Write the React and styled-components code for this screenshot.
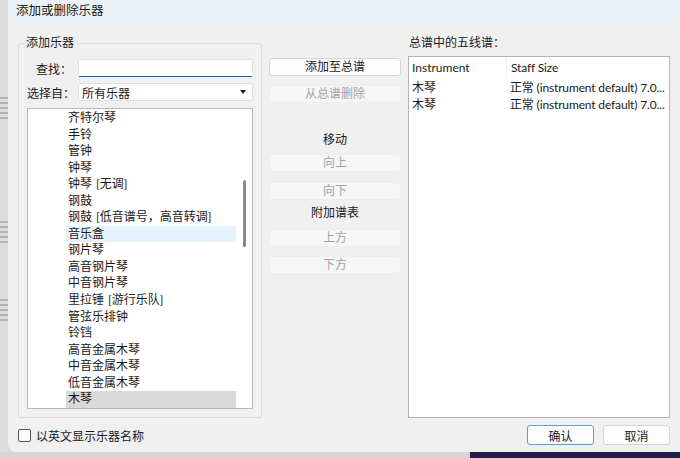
import React from 'react';
import styled, { createGlobalStyle } from 'styled-components';

const GlobalStyle = createGlobalStyle`
  html, body { margin: 0; padding: 0; }
  body {
    width: 680px;
    height: 458px;
    overflow: hidden;
    font-family: "Lato", "Noto Sans CJK SC", sans-serif;
    font-size: 12px;
    color: #1a1a1a;
  }
`;

const instruments = [
  { name: '齐特尔琴' },
  { name: '手铃' },
  { name: '管钟' },
  { name: '钟琴' },
  { name: '钟琴', note: '[无调]' },
  { name: '钢鼓' },
  { name: '钢鼓', note: '[低音谱号，高音转调]' },
  { name: '音乐盒', hover: true },
  { name: '钢片琴' },
  { name: '高音钢片琴' },
  { name: '中音钢片琴' },
  { name: '里拉锤', note: '[游行乐队]' },
  { name: '管弦乐排钟' },
  { name: '铃铛' },
  { name: '高音金属木琴' },
  { name: '中音金属木琴' },
  { name: '低音金属木琴' },
  { name: '木琴', selected: true },
];

// the staff size column is already shortened by the table in the original
const staves = [
  { name: '木琴', size: '正常 (instrument default) 7.0...' },
  { name: '木琴', size: '正常 (instrument default) 7.0...' },
];

const Screen = styled.div`
  width: 680px;
  height: 458px;
  display: flex;
  flex-direction: column;
  background: #d6d6d6;
`;

const Top = styled.div`
  display: flex;
  height: 452px;
`;

const ScoreStrip = styled.svg`
  width: 8px;
  height: 452px;
  flex: none;
  display: block;
`;

const Dialog = styled.div`
  flex: 1;
  display: flex;
  flex-direction: column;
  background: #f0f0f0;
  border-bottom-left-radius: 8px;
  overflow: hidden;
`;

const TitleBar = styled.div`
  height: 25px;
  flex: none;
  background: #eaf2f8;
  padding: 2px 0 0 8px;
  box-sizing: border-box;
  line-height: 18px;
  font-size: 12.5px;
`;

const Body = styled.div`
  flex: 1;
  display: grid;
  grid-template-columns: 244px 132px 262px;
  grid-template-rows: 383px 1fr;
  column-gap: 7px;
  padding: 10px 9px 0 10px;
  box-sizing: border-box;
`;

const GroupBox = styled.fieldset`
  margin: 0;
  padding: 8px 8px 7px 8px;
  border: 1px solid #dadada;
  border-radius: 3px;
  display: flex;
  flex-direction: column;
  gap: 6px;
  min-width: 0;
  box-sizing: border-box;
`;

const Legend = styled.legend`
  padding: 0 2px;
  margin-left: -3px;
  line-height: 16px;
`;

const FieldRow = styled.div`
  display: flex;
  align-items: center;
  height: 18px;
`;

const FieldLabel = styled.label`
  width: 51px;
  flex: none;
  text-align: ${p => (p.$right ? 'right' : 'left')};
  padding-right: ${p => (p.$right ? '6px' : '0')};
  box-sizing: border-box;
`;

const TextInput = styled.input`
  flex: 1;
  height: 18px;
  box-sizing: border-box;
  border: 1px solid #e3e3e3;
  border-bottom: 1px solid #0067c0;
  border-radius: 2px;
  background: #fff;
  outline: none;
  font: inherit;
  padding: 0 4px;
`;

const Select = styled.div`
  flex: 1;
  height: 18px;
  box-sizing: border-box;
  border: 1px solid #e0e0e0;
  border-radius: 3px;
  background: #fff;
  display: flex;
  align-items: center;
  justify-content: space-between;
  padding: 0 6px 0 3px;
`;

const Caret = styled.span`
  width: 0;
  height: 0;
  border-left: 3.5px solid transparent;
  border-right: 3.5px solid transparent;
  border-top: 4px solid #1a1a1a;
`;

const ListBox = styled.div`
  margin-top: 1px;
  height: 301px;
  box-sizing: border-box;
  border: 1px solid #b9b9b9;
  background: #fff;
  display: flex;
  overflow: hidden;
`;

const Items = styled.div`
  flex: 1;
  padding-left: 38px;
  padding-top: 1px;
  display: flex;
  flex-direction: column;
`;

const Item = styled.div`
  height: 16.55px;
  line-height: 16.55px;
  padding-left: 2px;
  flex: none;
  white-space: nowrap;
  background: ${p => (p.$selected ? '#d9d9d9' : p.$hover ? '#e5f1fb' : 'transparent')};
`;

const Note = styled.span`
  margin-left: 4px;
`;

const ScrollTrack = styled.div`
  width: 16px;
  flex: none;
  position: relative;
`;

const ScrollThumb = styled.div`
  position: absolute;
  left: 7px;
  top: 71px;
  width: 3px;
  height: 67px;
  border-radius: 2px;
  background: #8a8a8a;
`;

const Middle = styled.div`
  display: flex;
  flex-direction: column;
  padding-top: 23px;
`;

const SideButton = styled.button`
  height: 18px;
  box-sizing: border-box;
  margin: 0 0 ${p => p.$gap || 0}px 0;
  border: 1px solid ${p => (p.disabled ? '#eeeeee' : '#d5d5d5')};
  border-radius: 3px;
  background: ${p => (p.disabled ? '#f6f6f6' : '#fdfdfd')};
  color: ${p => (p.disabled ? '#a3a3a3' : '#1a1a1a')};
  font: inherit;
  padding: 0;
  line-height: 16px;
`;

const SectionLabel = styled.div`
  text-align: center;
  line-height: 16px;
  margin: ${p => p.$top}px 0 ${p => p.$bottom}px;
`;

const Right = styled.div`
  display: flex;
  flex-direction: column;
`;

const RightLabel = styled.div`
  line-height: 16px;
  padding-left: 1px;
  margin-bottom: 5px;
`;

const Table = styled.div`
  flex: 1;
  border: 1px solid #b4b4b4;
  background: #fff;
  padding: 1px 3px;
`;

const TableRow = styled.div`
  display: grid;
  grid-template-columns: 94px 1fr;
  height: ${p => (p.$head ? '20px' : '17px')};
  line-height: ${p => (p.$head ? '20px' : '17px')};
  margin-bottom: ${p => (p.$head ? '1px' : '0')};
`;

const Cell = styled.div`
  white-space: nowrap;
  padding-left: ${p => (p.$second ? '4px' : '0')};
  border-left: ${p => (p.$divider ? '1px solid #ececec' : 'none')};
  letter-spacing: ${p => (p.$second ? '-0.15px' : '0')};
`;

const Footer = styled.div`
  grid-column: 1 / -1;
  display: flex;
  align-items: center;
  padding-top: 7px;
  align-self: start;
`;

const CheckBox = styled.span`
  width: 13px;
  height: 13px;
  border: 1px solid #555;
  border-radius: 2px;
  background: #fff;
  box-sizing: border-box;
  margin-right: 5px;
`;

const Spacer = styled.div`
  flex: 1;
`;

const DialogButton = styled.button`
  width: 67px;
  height: 20px;
  box-sizing: border-box;
  margin-left: ${p => (p.$first ? '0' : '9px')};
  border: 1px solid ${p => (p.$primary ? '#5b9fd6' : '#d5d5d5')};
  border-radius: 3px;
  background: #fdfdfd;
  font: inherit;
  color: #1a1a1a;
  padding: 0;
`;

const BottomStrip = styled.div`
  flex: 1;
  display: flex;
`;

const BottomDark = styled.div`
  margin-left: 470px;
  flex: 1;
  background: #23204a;
`;

function Staves() {
  const groups = [98, 222, 300];
  return (
    <ScoreStrip viewBox="0 0 8 452">
      <rect width="8" height="452" fill="#dcdcdc" />
      {groups.map(g =>
        [0, 1, 2, 3, 4].map(i => (
          <line key={g + '-' + i} x1="0" x2="8" y1={g + i * 5} y2={g + i * 5} stroke="#7a7a7a" strokeWidth="0.8" />
        ))
      )}
    </ScoreStrip>
  );
}

export default function App() {
  return (
    <>
      <GlobalStyle />
      <Screen>
        <Top>
          <Staves />
          <Dialog>
            <TitleBar>添加或删除乐器</TitleBar>
            <Body>
              <GroupBox>
                <Legend>添加乐器</Legend>
                <FieldRow>
                  <FieldLabel $right>查找：</FieldLabel>
                  <TextInput />
                </FieldRow>
                <FieldRow>
                  <FieldLabel>选择自：</FieldLabel>
                  <Select>
                    <span>所有乐器</span>
                    <Caret />
                  </Select>
                </FieldRow>
                <ListBox>
                  <Items>
                    {instruments.map((it, i) => (
                      <Item key={i} $hover={it.hover} $selected={it.selected}>
                        {it.name}
                        {it.note && <Note>{it.note}</Note>}
                      </Item>
                    ))}
                  </Items>
                  <ScrollTrack>
                    <ScrollThumb />
                  </ScrollTrack>
                </ListBox>
              </GroupBox>

              <Middle>
                <SideButton $gap={9}>添加至总谱</SideButton>
                <SideButton disabled>从总谱删除</SideButton>
                <SectionLabel $top={29} $bottom={6}>移动</SectionLabel>
                <SideButton disabled $gap={10}>向上</SideButton>
                <SideButton disabled>向下</SideButton>
                <SectionLabel $top={5} $bottom={8}>附加谱表</SectionLabel>
                <SideButton disabled $gap={9}>上方</SideButton>
                <SideButton disabled>下方</SideButton>
              </Middle>

              <Right>
                <RightLabel>总谱中的五线谱：</RightLabel>
                <Table>
                  <TableRow $head>
                    <Cell>Instrument</Cell>
                    <Cell $second $divider>Staff Size</Cell>
                  </TableRow>
                  {staves.map((s, i) => (
                    <TableRow key={i}>
                      <Cell>{s.name}</Cell>
                      <Cell $second>{s.size}</Cell>
                    </TableRow>
                  ))}
                </Table>
              </Right>

              <Footer>
                <CheckBox />
                <span>以英文显示乐器名称</span>
                <Spacer />
                <DialogButton $first $primary>确认</DialogButton>
                <DialogButton>取消</DialogButton>
              </Footer>
            </Body>
          </Dialog>
        </Top>
        <BottomStrip>
          <BottomDark />
        </BottomStrip>
      </Screen>
    </>
  );
}
